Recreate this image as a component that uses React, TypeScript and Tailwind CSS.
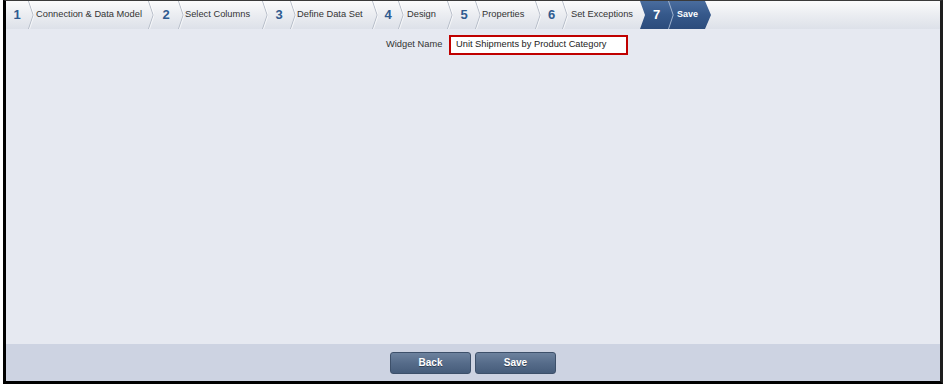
import React from "react";

function Sep({ light = false }: { light?: boolean }) {
  return (
    <svg width="6" height="28" viewBox="0 0 6 28" className="shrink-0 block">
      <polyline
        points="0.5,0 5.2,14 0.5,28"
        fill="none"
        stroke={light ? "#9fb3cf" : "#b3bac6"}
        strokeWidth="1"
      />
      {!light && (
        <polyline points="1.5,0 6.2,14 1.5,28" fill="none" stroke="#ffffff" strokeOpacity="0.7" strokeWidth="1" />
      )}
    </svg>
  );
}

export default function App() {
  const font = { fontFamily: '"Liberation Sans", Arial, sans-serif' };
  const num = "shrink-0 flex items-center justify-center text-[13px] font-bold text-[#2f5b90]";
  const lab = "shrink-0 flex items-center whitespace-nowrap";
  return (
    <div className="w-[945px] h-[384px] bg-white overflow-hidden" style={font}>
      <div className="ml-[3px] w-[940px] h-[384px] border-l-[3px] border-r-[3px] border-b-[3px] border-t border-l-black border-r-[#1e1e1e] border-b-black border-t-[#3a3a3a] flex flex-col">
        {/* Header / steps */}
        <div className="h-[28px] shrink-0 flex items-stretch bg-[linear-gradient(#fbfbfc,#eceef2_45%,#dde1e9)] text-[9.3px] text-[#333]">
          <div className={`w-[22px] ${num}`}>1</div>
          <Sep />
          <div className={`w-[114px] pl-[2px] ${lab}`}>Connection &amp; Data Model</div>
          <Sep />
          <div className={`w-[24px] ${num}`}>2</div>
          <Sep />
          <div className={`w-[78px] pl-[1px] ${lab}`}>Select Columns</div>
          <Sep />
          <div className={`w-[22px] ${num}`}>3</div>
          <Sep />
          <div className={`w-[76px] pl-[1px] ${lab}`}>Define Data Set</div>
          <Sep />
          <div className={`w-[20px] ${num}`}>4</div>
          <Sep />
          <div className={`w-[43px] pl-[3px] ${lab}`}>Design</div>
          <Sep />
          <div className={`w-[22px] ${num}`}>5</div>
          <Sep />
          <div className={`w-[54px] pl-[1px] ${lab}`}>Properties</div>
          <Sep />
          <div className={`w-[21px] ${num}`}>6</div>
          <Sep />
          <div className={`w-[72px] pl-[3px] ${lab}`}>Set Exceptions</div>
          <div className="w-[71px] shrink-0 flex items-stretch bg-[linear-gradient(#4a6d9e,#35588a_50%,#2c4c7c)] [clip-path:polygon(0_0,65px_0,71px_50%,65px_100%,0_100%,5px_50%)] text-white">
            <div className="w-[28px] pl-[5px] flex items-center justify-center text-[13px] font-bold">7</div>
            <Sep light />
            <div className="pl-[3px] flex items-center font-bold text-[9px]">Save</div>
          </div>
        </div>

        {/* Body */}
        <div className="flex-1 bg-[#e6e9f1] pt-[6px]">
          <div className="flex items-center pl-[380px]">
            <span className="text-[9.3px] text-[#333] w-[63px] shrink-0 whitespace-nowrap">Widget Name</span>
            <div className="w-[179px] h-[20px] shrink-0 border-2 border-[#c00000] bg-white flex items-center pl-[5px] text-[9.3px] text-[#222] whitespace-nowrap">
              Unit Shipments by Product Category
            </div>
          </div>
        </div>

        {/* Footer */}
        <div className="h-[37px] shrink-0 bg-[#cdd3e2] flex items-center justify-center gap-[4px]">
          <button className="w-[81px] h-[22px] rounded-[3px] border border-[#3d506a] bg-[linear-gradient(#6d829e,#566c8a_50%,#465c7a)] text-white text-[10px] font-bold [text-shadow:0_1px_0_rgba(0,0,0,0.4)]">
            Back
          </button>
          <button className="w-[81px] h-[22px] rounded-[3px] border border-[#3d506a] bg-[linear-gradient(#6d829e,#566c8a_50%,#465c7a)] text-white text-[10px] font-bold [text-shadow:0_1px_0_rgba(0,0,0,0.4)]">
            Save
          </button>
        </div>
      </div>
    </div>
  );
}
